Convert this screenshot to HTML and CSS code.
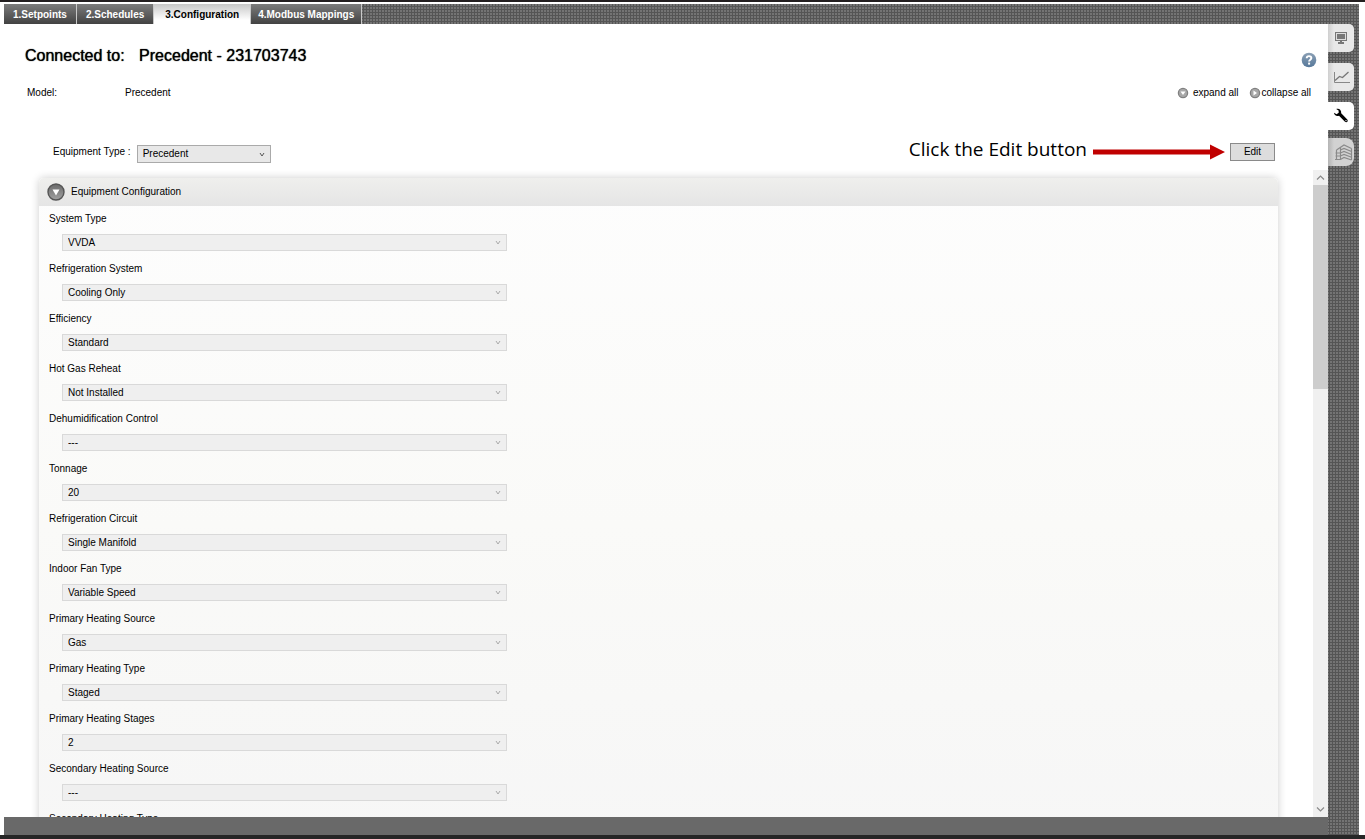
FILE: index.html
```html
<!DOCTYPE html>
<html lang="en">
<head>
    <meta charset="UTF-8">
    <meta name="viewport" content="width=device-width, initial-scale=1.0">
    <title>Configuration</title>
    <link rel="stylesheet" href="styles.css">
</head>
<body>
    <div class="window">
        <div class="main">
            <nav class="tabs">
                <a class="tab" href="#setpoints">1.Setpoints</a>
                <a class="tab" href="#schedules">2.Schedules</a>
                <a class="tab active" href="#configuration">3.Configuration</a>
                <a class="tab" href="#modbus">4.Modbus Mappings</a>
            </nav>

            <div class="page">
                <div class="title-row">
                    <h1>Connected to: <span class="device">Precedent - 231703743</span></h1>
                    <button class="icon-button" aria-label="Help">
                        <svg width="16" height="16" viewBox="0 0 16 16">
                            <defs>
                                <linearGradient id="blue" x1="0" y1="0" x2="0" y2="1">
                                    <stop offset="0" stop-color="#8ba0b5"/>
                                    <stop offset="1" stop-color="#56789a"/>
                                </linearGradient>
                            </defs>
                            <circle cx="8" cy="8" r="7.3" fill="url(#blue)"/>
                            <path d="M5.7 6.3C5.7 3.4 10.4 3.5 10.4 6.1C10.4 7.7 8.1 7.7 8.1 9.5" fill="none" stroke="#fff" stroke-width="1.9"/>
                            <rect x="7.1" y="10.6" width="2" height="2" fill="#fff"/>
                        </svg>
                    </button>
                </div>

                <div class="model-row">
                    <span class="model-label">Model:</span>
                    <span>Precedent</span>
                    <div class="toggles">
                        <button class="link-button expand">
                            <svg width="12" height="12" viewBox="0 0 12 12">
                                <circle cx="6" cy="6" r="4.6" fill="#a8a8a8" stroke="#808080" stroke-width="1.3"/>
                                <path d="M3.5 4.5H8.5L6 8Z" fill="#fff"/>
                            </svg>
                            <span>expand all</span>
                        </button>
                        <button class="link-button">
                            <svg width="12" height="12" viewBox="0 0 12 12">
                                <circle cx="6" cy="6" r="4.6" fill="#a8a8a8" stroke="#808080" stroke-width="1.3"/>
                                <path d="M4.5 3.5V8.5L8 6Z" fill="#fff"/>
                            </svg>
                            <span>collapse all</span>
                        </button>
                    </div>
                </div>

                <div class="type-row">
                    <label for="equipmentType">Equipment Type :</label>
                    <select id="equipmentType" class="type-select"><option>Precedent</option></select>
                    <div class="callout">
                        <span class="callout-text">Click the Edit button</span>
                        <svg width="132" height="16" viewBox="0 0 132 16">
                            <path d="M0 5.5H117V0.5L132 8L117 15.5V10.5H0Z" fill="#c00000"/>
                        </svg>
                    </div>
                    <button class="edit">Edit</button>
                </div>

                <div class="scroll-area">
                    <div class="content">
                        <section class="panel">
                            <h2 class="panel-header">
                                <svg width="18" height="18" viewBox="0 0 18 18">
                                    <defs>
                                        <linearGradient id="gray" x1="0" y1="0" x2="0" y2="1">
                                            <stop offset="0" stop-color="#6a6a6a"/>
                                            <stop offset="1" stop-color="#a2a2a2"/>
                                        </linearGradient>
                                    </defs>
                                    <circle cx="9" cy="9" r="8" fill="url(#gray)" stroke="#555" stroke-width="1.4"/>
                                    <path d="M5.5 6.5H12.5L9 12.5Z" fill="#fff"/>
                                </svg>
                                <span>Equipment Configuration</span>
                            </h2>
                            <div class="fields">
                                <div class="field">
                                    <label for="systemType">System Type</label>
                                    <select id="systemType" disabled><option>VVDA</option></select>
                                </div>
                                <div class="field">
                                    <label for="refrigerationSystem">Refrigeration System</label>
                                    <select id="refrigerationSystem" disabled><option>Cooling Only</option></select>
                                </div>
                                <div class="field">
                                    <label for="efficiency">Efficiency</label>
                                    <select id="efficiency" disabled><option>Standard</option></select>
                                </div>
                                <div class="field">
                                    <label for="hotGasReheat">Hot Gas Reheat</label>
                                    <select id="hotGasReheat" disabled><option>Not Installed</option></select>
                                </div>
                                <div class="field">
                                    <label for="dehumidification">Dehumidification Control</label>
                                    <select id="dehumidification" disabled><option>---</option></select>
                                </div>
                                <div class="field">
                                    <label for="tonnage">Tonnage</label>
                                    <select id="tonnage" disabled><option>20</option></select>
                                </div>
                                <div class="field">
                                    <label for="refrigerationCircuit">Refrigeration Circuit</label>
                                    <select id="refrigerationCircuit" disabled><option>Single Manifold</option></select>
                                </div>
                                <div class="field">
                                    <label for="indoorFanType">Indoor Fan Type</label>
                                    <select id="indoorFanType" disabled><option>Variable Speed</option></select>
                                </div>
                                <div class="field">
                                    <label for="primarySource">Primary Heating Source</label>
                                    <select id="primarySource" disabled><option>Gas</option></select>
                                </div>
                                <div class="field">
                                    <label for="primaryType">Primary Heating Type</label>
                                    <select id="primaryType" disabled><option>Staged</option></select>
                                </div>
                                <div class="field">
                                    <label for="primaryStages">Primary Heating Stages</label>
                                    <select id="primaryStages" disabled><option>2</option></select>
                                </div>
                                <div class="field">
                                    <label for="secondarySource">Secondary Heating Source</label>
                                    <select id="secondarySource" disabled><option>---</option></select>
                                </div>
                                <div class="field">
                                    <label for="secondaryType">Secondary Heating Type</label>
                                    <select id="secondaryType" disabled><option>---</option></select>
                                </div>
                            </div>
                        </section>
                    </div>
                    <div class="scrollbar">
                        <svg width="15" height="15" viewBox="0 0 15 15"><path d="M4 9.5L7.5 6L11 9.5" fill="none" stroke="#8a8a8a" stroke-width="1.2"/></svg>
                        <div class="track"><div class="thumb"></div></div>
                        <svg width="15" height="15" viewBox="0 0 15 15"><path d="M4 5.5L7.5 9L11 5.5" fill="none" stroke="#8a8a8a" stroke-width="1.2"/></svg>
                    </div>
                </div>
            </div>

            <div class="statusbar"></div>
        </div>

        <div class="rail">
            <button class="rail-button" aria-label="Status">
                <svg width="12" height="12" viewBox="0 0 12 12">
                    <rect x="0" y="0" width="12" height="9" fill="#777"/>
                    <rect x="1.5" y="1.5" width="9" height="6" fill="#777" stroke="#ddd"/>
                    <path d="M5 9H7V10H9V12H3V10H5Z" fill="#777"/>
                </svg>
            </button>
            <button class="rail-button" aria-label="Trends">
                <svg width="17" height="13" viewBox="0 0 17 13">
                    <path d="M1.5 1V11.5H17" fill="none" stroke="#888"/>
                    <path d="M2 9.5L6.5 5.5L9.5 6.5L15.5 1" fill="none" stroke="#777" stroke-width="1.3"/>
                </svg>
            </button>
            <button class="rail-button selected" aria-label="Tools">
                <svg width="16" height="16" viewBox="0 0 16 16">
                    <path d="M1 4.8L3.6 6.2L5.7 4.8L5.6 2.4L3.2 1C6 0 8.6 2 8.2 5.2L14.3 11.4C15.6 13 13.7 15.2 12 13.8L6 7.8C3.3 8.6 1 7 1 4.8Z" fill="#000"/>
                    <circle cx="13" cy="12.6" r="0.7" fill="#fff"/>
                </svg>
            </button>
            <button class="rail-button dim" aria-label="Building">
                <svg width="19" height="17" viewBox="0 0 19 17">
                    <path d="M2.5 6V16M6.5 3.5V16M17.5 4.5V16M2.5 6L10 1L17.5 4.5M6.5 6L10 4.5L17.5 7.5M1.5 9H6.5L10 7.5L17.5 10.5M1.5 12H6.5L10 10.5L17.5 13.3M1 15.5H6.5L10 13.5L17.5 16" fill="none" stroke="#8a8a8a" stroke-width="1.2"/>
                </svg>
            </button>
        </div>
    </div>
</body>
</html>
```
FILE: styles.css
```css
* {
    box-sizing: border-box;
}
body {
    margin: 0;
    height: 100vh;
    display: flex;
    overflow: hidden;
    background-color: white;
    border-top: 2px solid #231f20;
    border-bottom: 4px solid #262626;
    font-family: "Liberation Sans", Arial, sans-serif;
    font-size: 10px;
    line-height: 14px;
    color: #000;
}
button, select {
    font: inherit;
    color: inherit;
}
.window {
    flex: 1;
    min-width: 0;
    display: flex;
    margin: 2px 6px 0 4px;
    background-color: #555;
    background-image: radial-gradient(circle at 1px 1px, #747474 0, #747474 1px, transparent 1px);
    background-size: 3px 3px;
}
.main {
    flex: 1;
    min-width: 0;
    display: flex;
    flex-direction: column;
}
.tabs {
    display: flex;
    height: 20px;
}
.tab {
    padding: 4px 9px 0;
    border-right: 1px solid #c8c8c8;
    background: linear-gradient(#7c7c7c, #424242);
    color: white;
    font-weight: bold;
    text-decoration: none;
}
.tab:last-child {
    padding: 4px 7px 0;
}
.tab.active {
    padding: 4px 11px 0;
    background: linear-gradient(#c8c8c8, #fff 80%);
    color: black;
}
.page {
    flex: 1;
    min-height: 0;
    display: flex;
    flex-direction: column;
    background-color: white;
}
.title-row {
    display: flex;
    justify-content: space-between;
    align-items: flex-start;
    padding: 22px 11px 0 21px;
}
h1 {
    margin: 0;
    font-size: 16px;
    line-height: 20px;
    font-weight: normal;
    text-shadow: 0 0 1px #000;
}
.device {
    margin-left: 10px;
}
.icon-button {
    padding: 0;
    margin-top: 6px;
    height: 16px;
    border: none;
    background: none;
}
svg {
    display: block;
}
.model-row {
    display: flex;
    align-items: center;
    padding: 18px 17px 0 23px;
}
.model-label {
    width: 98px;
}
.toggles {
    display: flex;
    gap: 10px;
    margin-left: auto;
}
.link-button {
    display: flex;
    align-items: center;
    gap: 1px;
    padding: 0;
    border: none;
    background: none;
}
.link-button.expand {
    gap: 4px;
}
.type-row {
    display: flex;
    align-items: center;
    height: 28px;
    margin-top: 38px;
    padding: 0 53px 0 49px;
}
.type-select {
    width: 134px;
    height: 18px;
    margin: 4px 0 0 6px;
}
.callout {
    display: flex;
    align-items: center;
    gap: 6px;
    margin: 0 5px 0 auto;
}
.callout-text {
    padding-bottom: 6px;
    font-family: "Open Sans", sans-serif;
    font-size: 19px;
    line-height: 22px;
}
.edit {
    width: 45px;
    height: 18px;
    padding: 0;
    border: 1px solid #8a8a8a;
    background-color: #ddd;
}
select {
    appearance: none;
    padding: 0 5px;
    border: 1px solid #aaa;
    border-radius: 0;
    background: #e8e8e8 url("data:image/svg+xml,%3Csvg xmlns='http://www.w3.org/2000/svg' width='6' height='5'%3E%3Cpath d='M1 1L3 4L5 1' fill='none' stroke='%23555'/%3E%3C/svg%3E") no-repeat right 5px center;
}
select:disabled {
    opacity: 1;
    color: #000;
    border-color: #d9d9d9;
    background-color: #efefef;
    background-image: url("data:image/svg+xml,%3Csvg xmlns='http://www.w3.org/2000/svg' width='6' height='5'%3E%3Cpath d='M1 1L3 4L5 1' fill='none' stroke='%23aaa'/%3E%3C/svg%3E");
}
.scroll-area {
    flex: 1;
    min-height: 0;
    display: flex;
    margin-top: 4px;
}
.content {
    flex: 1;
    min-width: 0;
    padding: 8px 35px 0;
    overflow: hidden;
}
.panel {
    border-radius: 5px 5px 0 0;
    background: linear-gradient(#fdfdfd, #fafaf8 50%, #f6f6f6);
    box-shadow: 0 0 8px rgba(0,0,0,0.2);
}
.panel-header {
    display: flex;
    align-items: center;
    gap: 6px;
    height: 28px;
    margin: 0;
    padding: 0 8px;
    border-radius: 5px 5px 0 0;
    background: linear-gradient(#efefed, #e5e5e5);
    font-size: 10px;
    font-weight: normal;
}
.fields {
    padding: 6px 10px 10px;
}
.field {
    display: flex;
    flex-direction: column;
    height: 50px;
}
.field select {
    width: 445px;
    height: 17px;
    margin: 8px 0 0 13px;
}
.scrollbar {
    display: flex;
    flex-direction: column;
    width: 15px;
    background-color: #f0f0f0;
}
.track {
    flex: 1;
}
.thumb {
    height: 33%;
    background-color: #cdcdcd;
}
.statusbar {
    height: 18px;
    background-color: #696969;
}
.rail {
    width: 31px;
    padding-top: 20px;
    display: flex;
    flex-direction: column;
    gap: 11px;
}
.rail-button {
    display: flex;
    align-items: center;
    justify-content: center;
    width: 26px;
    height: 28px;
    padding: 0;
    border: none;
    border-radius: 0 5px 5px 0;
    background: linear-gradient(to right, #cfcfcf, #e8e8e8 6px);
}
.rail-button.selected {
    background: white;
}
.rail-button.dim {
    margin-top: -3px;
    padding-left: 4px;
    border-radius: 0 8px 8px 0;
    background: linear-gradient(to right, #b4b4b4, #d2d2d2 6px);
}
```
